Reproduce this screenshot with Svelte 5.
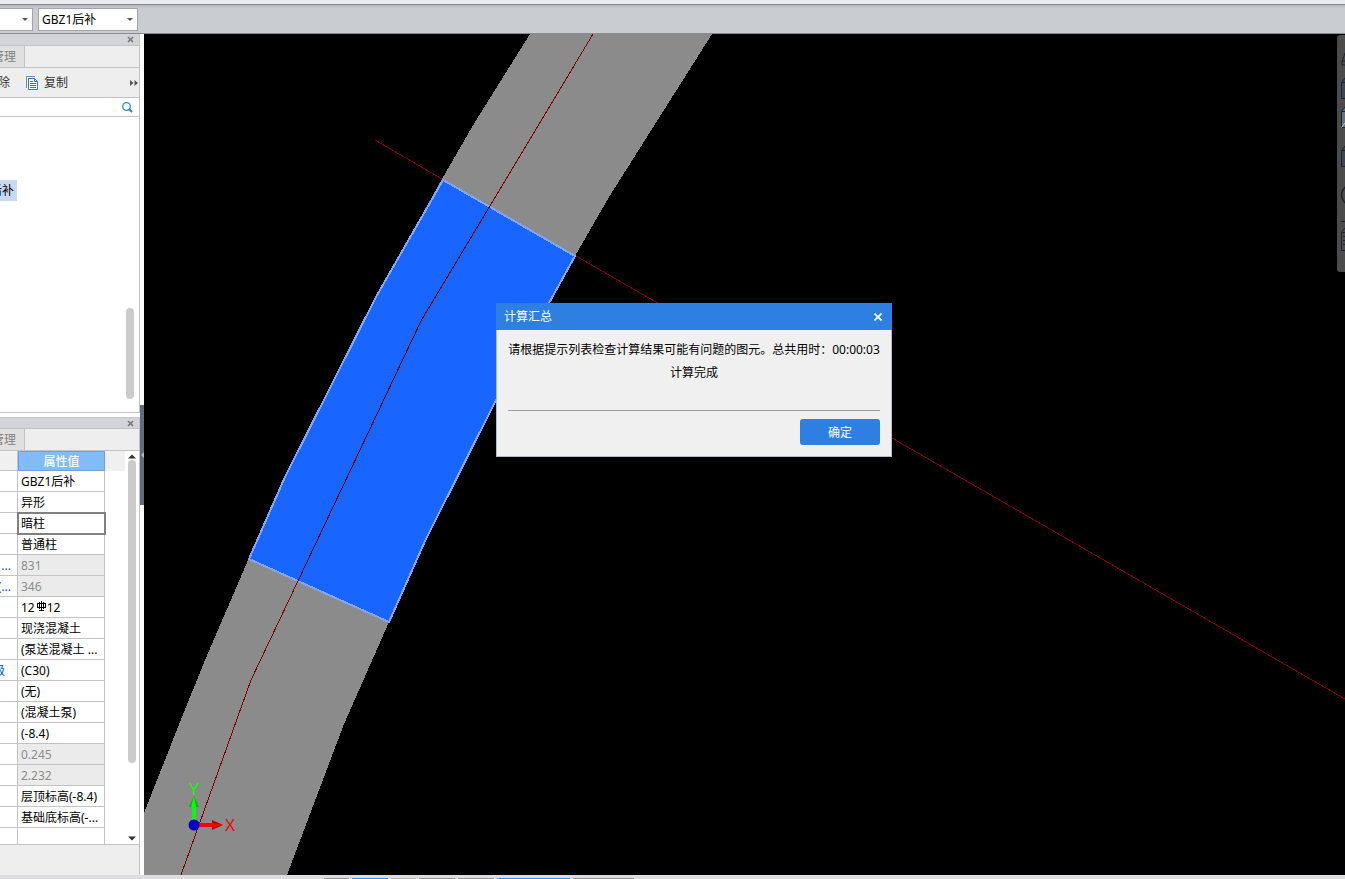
<script lang="ts">
  type Row = { name?: string; value: string; readonly?: boolean; rebar?: boolean };

  const rows: Row[] = [
    { value: "GBZ1后补" },
    { value: "异形" },
    { value: "暗柱" },
    { value: "普通柱" },
    { name: "...", value: "831", readonly: true },
    { name: "(...", value: "346", readonly: true },
    { value: "12", rebar: true },
    { value: "现浇混凝土" },
    { value: "(泵送混凝土 ..." },
    { name: "级", value: "(C30)" },
    { value: "(无)" },
    { value: "(混凝土泵)" },
    { value: "(-8.4)" },
    { value: "0.245", readonly: true },
    { value: "2.232", readonly: true },
    { value: "层顶标高(-8.4)" },
    { value: "基础底标高(-..." },
  ];

  let selected = $state(2);
  let dialogOpen = $state(true);

  const groups = [
    { width: 25, kind: "grey" },
    { width: 36, kind: "blue" },
    { width: 25, kind: "light" },
    { width: 36, kind: "grey" },
    { width: 36, kind: "grey" },
    { width: 73, kind: "blue" },
    { width: 61, kind: "grey" },
  ];
</script>

{#snippet cross()}
  <svg width="7" height="7" viewBox="0 0 7 7" aria-hidden="true">
    <path d="M1 1 6 6M6 1 1 6" fill="none" stroke="currentColor" stroke-width="1.6" />
  </svg>
{/snippet}

<div class="app">
  <header>
    <div class="ribbon"></div>
    <div class="bar">
      <span class="combo floor">
        <select aria-label="楼层"><option></option></select>
      </span>
      <span class="combo">
        <select aria-label="构件"><option>GBZ1后补</option></select>
      </span>
    </div>
  </header>

  <main>
    <aside class="side">
      <section class="panel list">
        <div class="title"><button aria-label="关闭">{@render cross()}</button></div>
        <div class="tabs"><button>管理</button></div>
        <div class="tools">
          <button class="cut">除</button>
          <button class="copy">
            <svg width="13" height="14" viewBox="0 0 13 14" aria-hidden="true">
              <path d="M.5 12V.5H9" fill="none" stroke="#7289a8" />
              <path d="M2.500 2.500h6l3 3v8h-9z" fill="#fff" stroke="#2f7bd0" />
              <path d="M8.500 2.500v3h3" fill="none" stroke="#2f7bd0" />
              <path d="M4 5.500h3M4 7.500h6M4 9.500h6M4 11.500h6" stroke="#2f7bd0" />
            </svg>
            复制
          </button>
          <button class="more" aria-label="更多">
            <svg width="8" height="6" viewBox="0 0 8 6" aria-hidden="true">
              <path d="M0 0 3.500 3 0 6zM4.500 0 8 3 4.500 6z" fill="#555" />
            </svg>
          </button>
        </div>
        <div class="search">
          <input type="text" aria-label="搜索" />
          <svg width="11" height="11" viewBox="0 0 11 11" aria-hidden="true">
            <circle cx="4.500" cy="4.500" r="3.800" fill="none" stroke="#2f8ac4" stroke-width="1.300" />
            <path d="M7 7l3 3" stroke="#2080c0" stroke-width="2" />
          </svg>
        </div>
        <div class="tree">
          <div class="node">后补</div>
          <div class="thumb"></div>
        </div>
      </section>

      <section class="panel props">
        <div class="title"><button aria-label="关闭">{@render cross()}</button></div>
        <div class="tabs"><button>管理</button></div>
        <div class="sheet">
          <table>
            <thead>
              <tr><th></th><th class="head">属性值</th></tr>
            </thead>
            <tbody>
              {#each rows as row, i}
                <tr onclick={() => (selected = i)}>
                  <td class="name" class:short={row.name === "级"}><span>{row.name ?? ""}</span></td>
                  <td class="value" class:readonly={row.readonly} class:selected={selected === i}>
                    {row.value}{#if row.rebar}<svg width="12" height="11" viewBox="0 0 12 11" aria-label="钢筋">
                        <path d="M6.500 0v10M2 2.500h9M2 6.500h9M2.500 2v5M10.500 2v5M4.500 1v7M8.500 1v7M4 9.500h5" fill="none" stroke="#000" />
                      </svg>12{/if}
                  </td>
                </tr>
              {/each}
              <tr class="blank"><td></td><td></td></tr>
            </tbody>
          </table>
          <div class="corner"></div>
          <div class="scroll">
            <svg width="8" height="5" viewBox="0 0 8 5" aria-hidden="true"><path d="M0 4.500 4 .5l4 4z" fill="#333" /></svg>
            <div class="track"></div>
            <svg width="8" height="5" viewBox="0 0 8 5" aria-hidden="true"><path d="M0 .5h8l-4 4z" fill="#333" /></svg>
          </div>
        </div>
        <div class="foot"></div>
      </section>
    </aside>

    <div class="split">
      <button aria-label="收起">
        <svg width="3" height="6" viewBox="0 0 3 6" aria-hidden="true"><path d="M3 0v6L0 3z" fill="#b5b9be" /></svg>
      </button>
    </div>

    <div class="canvas">
      <svg class="drawing" viewBox="144 34 1201 841" preserveAspectRatio="xMinYMin slice" aria-hidden="true">
        <g shape-rendering="crispEdges">
          <path
            d="M530 34 475 122 442 179 376 297 285 477 249 558 205 660 180 722 144 813V875H287L344 724 389 622 425 541 496 400 549 303 575 256 609 197 712 34z"
            fill="#8b8b8b"
          />
          <path d="M375 140 442 179M576 256 1345 699" stroke="#800000" />
          <path
            d="M443 180 376 297 285 477 249 559 389 622 425 541 496 400 549 303 575 256z"
            fill="#1866ff"
            stroke="#82a6ff"
            stroke-width="2"
          />
          <path d="M593 34 490 206 421 321 298 581 251 680 181 875" fill="none" stroke="#800000" />
        </g>
        <!-- origin axes -->
        <path d="M192 806h4v16h-4z" fill="#0f0" />
        <path d="M194 796l5 11h-10z" fill="#00b400" />
        <path d="M194 796l2 11h-5z" fill="#0f0" />
        <path d="M198 823h15v4h-15z" fill="#f00" />
        <path d="M223 825l-11 5v-10z" fill="#b40000" />
        <path d="M223 825l-11 3v-5z" fill="#f00" />
        <circle cx="194" cy="825" r="5.500" fill="#0000c0" />
        <text x="194" y="795" text-anchor="middle" fill="#0f0">Y</text>
        <text x="230" y="831" text-anchor="middle" fill="#f00">X</text>
      </svg>

      <div class="view-tools">
        <svg width="8" height="237" viewBox="0 0 8 237" aria-hidden="true">
          <g fill="none" stroke="#1d242b">
            <path d="M8 18 5 27M8 26H5v4h3" />
            <path d="M8 43 4.500 47.500v16H8M4.500 47.500H8" fill="#3b4650" />
            <path d="M8 72 4.500 76.500v16H8M4.500 76.500H8" fill="#66717f" />
            <path d="M4.500 92.500 8 88" stroke="#c0c8d0" />
            <path d="M8 111 4.500 115.500v16H8M4.500 115.500H8" fill="#3b4650" />
            <path d="M8 152q-7 8 0 16" stroke-width="1.500" />
            <path d="M4 186.500h4" />
            <path d="M8 193 4.500 197.500v18H8M4.500 197.500H8M6 201.500h2M6 205.500h2M6 209.500h2" />
          </g>
        </svg>
      </div>

      {#if dialogOpen}
        <div class="dialog" role="dialog" aria-labelledby="dialog-title">
          <div class="dialog-title">
            <span id="dialog-title">计算汇总</span>
            <button aria-label="关闭" onclick={() => (dialogOpen = false)}>
              <svg width="8" height="8" viewBox="0 0 8 8" aria-hidden="true">
                <path d="M.5.5l7 7M7.500.5l-7 7" stroke="#fff" stroke-width="1.700" />
              </svg>
            </button>
          </div>
          <div class="dialog-body">
            <p>请根据提示列表检查计算结果可能有问题的图元。总共用时：00:00:03</p>
            <p>计算完成</p>
          </div>
          <div class="actions">
            <button onclick={() => (dialogOpen = false)}>确定</button>
          </div>
        </div>
      {/if}
    </div>
  </main>

  <footer>
    {#each groups as group}
      <span class={group.kind} style="width: {group.width}px"></span>
    {/each}
  </footer>
</div>

<style>
  :global(body) {
    margin: 0;
  }

  .app {
    display: flex;
    flex-direction: column;
    height: 100vh;
    overflow: hidden;
    background: #fff;
    color: #000;
    font-family: "Noto Sans", "Noto Sans CJK SC", sans-serif;
    font-size: 12px;
    line-height: 20px;
  }

  .app *,
  .app {
    box-sizing: border-box;
  }

  button,
  select,
  input {
    margin: 0;
    padding: 0;
    border: 0;
    border-radius: 0;
    background: none;
    color: inherit;
    font: inherit;
    outline: none;
  }

  svg {
    display: block;
    flex-shrink: 0;
  }

  .ribbon {
    height: 4px;
    background: #e8ecee;
  }

  .bar {
    display: flex;
    gap: 5px;
    height: 30px;
    padding-top: 3px;
    border-top: 1px solid #868c97;
    border-bottom: 1px solid #868c90;
    background: linear-gradient(#b2b5ba, #c9ccd1 3px);
  }

  .combo {
    position: relative;
    display: block;
    width: 100px;
    height: 23px;
    border: 1px solid #a2a4a8;
    background: #fff;

    & select {
      display: block;
      width: 100%;
      height: 100%;
      padding-left: 3px;
      appearance: none;
    }

    &::after {
      content: "";
      position: absolute;
      top: 9px;
      right: 4px;
      border: 3px solid transparent;
      border-top-color: #555;
      border-bottom: 0;
      pointer-events: none;
    }
  }

  .floor {
    width: 33px;
    border-left: 0;
  }

  main {
    display: flex;
    flex: 1;
    min-height: 0;
  }

  .side {
    display: flex;
    flex-direction: column;
    flex: 0 0 140px;
    gap: 4px;
    min-width: 0;
  }

  .panel {
    display: flex;
    flex-direction: column;
    border-right: 1px solid #c2c3c7;
    background: #eee;
  }

  .list {
    flex: 1;
    border-bottom: 1px solid #c2c3c7;
  }

  .title {
    display: flex;
    align-items: center;
    justify-content: flex-end;
    height: 12px;
    padding-right: 5px;
    border-bottom: 1px solid #c2c3c7;
    background: #d3d4d9;
    color: #777;
  }

  .props .title {
    border-top: 1px solid #c2c3c7;
  }

  .tabs {
    height: 22px;
    border-bottom: 1px solid #c2c3c7;

    & button {
      display: flex;
      justify-content: flex-end;
      align-items: center;
      overflow: hidden;
      width: 25px;
      height: 100%;
      padding-right: 8px;
      border-right: 1px solid #c2c3c7;
      background: #e0e0e0;
      color: #808080;
      white-space: nowrap;
    }
  }

  .tools {
    display: flex;
    align-items: center;
    height: 30px;
    border-bottom: 1px solid #c2c3c7;
    color: #333;

    & .cut {
      display: flex;
      justify-content: flex-end;
      width: 10px;
      overflow: hidden;
    }

    & .copy {
      display: flex;
      align-items: center;
      gap: 5px;
      margin-left: 16px;
    }

    & .more {
      margin-left: auto;
      padding-right: 1px;
    }
  }

  .search {
    display: flex;
    align-items: center;
    height: 19px;
    padding-right: 6px;
    border-bottom: 1px solid #c2c3c7;
    background: #fff;

    & input {
      flex: 1;
      width: 0;
      min-width: 0;
      height: 100%;
    }
  }

  .tree {
    display: flex;
    flex: 1;
    justify-content: space-between;
    padding: 63px 5px 13px 0;
    background: #fff;
  }

  .node {
    display: flex;
    justify-content: flex-end;
    width: 17px;
    height: 21px;
    padding-right: 3px;
    overflow: hidden;
    background: #c8d9f1;
    line-height: 22px;
    white-space: nowrap;
  }

  .thumb {
    align-self: flex-end;
    width: 8px;
    height: 91px;
    border-radius: 4px;
    background: #cbcbcb;
  }

  .sheet {
    display: flex;
    border-bottom: 1px solid #c2c3c7;
    background: #fff;
  }

  table {
    width: 105px;
    table-layout: fixed;
    border-collapse: separate;
    border-spacing: 0;
  }

  tr {
    height: 21px;
  }

  th {
    width: 18px;
    height: 20px;
    padding: 0;
    border-right: 1px solid #c2c3c7;
    border-bottom: 1px solid #c2c3c7;
    background: #f0f0f0;
    line-height: 18px;
  }

  .head {
    width: 87px;
    padding-top: 1px;
    border: 1px solid #66a4e4;
    background: #80bbfa;
    color: #fff;
    font-weight: 500;
    line-height: 17px;
  }

  thead tr {
    height: 20px;
  }

  td {
    height: 21px;
    padding: 2px 0 0;
    border-right: 1px solid #c2c3c7;
    border-bottom: 1px solid #c2c3c7;
    overflow: hidden;
    line-height: 18px;
    white-space: nowrap;
  }

  .name {
    color: #0050e0;

    & span {
      display: flex;
      justify-content: flex-end;
      padding-right: 6px;
    }

    &.short span {
      padding-right: 12px;
    }
  }

  .value {
    padding-left: 3px;

    & svg {
      display: inline-block;
    }
  }

  .readonly {
    background: #ebebeb;
    color: #8c8c8c;
  }

  .selected {
    outline: 2px solid #808080;
    outline-offset: -1px;
  }

  .blank,
  .blank td {
    height: 16px;
    padding: 0;
    border-bottom: 0;
  }

  .corner {
    width: 20px;
    height: 20px;
    background: #f0f0f0;
  }

  .scroll {
    display: flex;
    flex-direction: column;
    align-items: center;
    flex: 1;
    padding: 3px 0;
  }

  .track {
    width: 8px;
    height: 303px;
    margin: 1px 0 auto;
    border-radius: 4px;
    background: #cbcbcb;
  }

  .foot {
    height: 30px;
  }

  .split {
    flex: 0 0 4px;
    padding-top: 371px;

    & button {
      display: flex;
      align-items: center;
      justify-content: flex-end;
      width: 100%;
      height: 100px;
      background: #626c79;
    }
  }

  .canvas {
    position: relative;
    flex: 1;
    min-width: 0;
    overflow: hidden;
    background: #000;
  }

  .drawing {
    width: 100%;
    height: 100%;
    font-family: "Liberation Sans", sans-serif;
    font-size: 16px;
  }

  .view-tools {
    position: absolute;
    top: 1px;
    right: 0;
    border-radius: 3px 0 0 3px;
    background: #4b4b4b;
  }

  .dialog {
    position: absolute;
    top: 269px;
    left: 352px;
    width: 396px;
    border: 1px solid #b4bccb;
    border-top: 0;
    background: #f0f0f0;
  }

  .dialog-title {
    display: flex;
    align-items: center;
    justify-content: space-between;
    height: 27px;
    margin: 0 -1px;
    padding: 0 10px 0 8px;
    background: #2d80e2;
    color: #fff;
  }

  .dialog-body {
    height: 81px;
    margin: 0 11px;
    padding-top: 8px;
    border-bottom: 1px solid #a0a0a0;
    text-align: center;
    white-space: nowrap;

    & p {
      margin: 0;
      line-height: 23px;
    }
  }

  .actions {
    display: flex;
    justify-content: flex-end;
    padding: 8px 11px 11px;

    & button {
      width: 80px;
      height: 26px;
      padding-top: 2px;
      border-radius: 3px;
      background: #2d80e2;
      color: #fff;
    }
  }

  footer {
    display: flex;
    align-items: flex-end;
    gap: 3px;
    height: 4px;
    padding-left: 324px;
    background: #dddde0;

    & span {
      height: 1px;
      background: #929292;
    }

    & .blue {
      background: #2492ff;
    }

    & .light {
      background: #b5b5b5;
    }
  }
</style>
